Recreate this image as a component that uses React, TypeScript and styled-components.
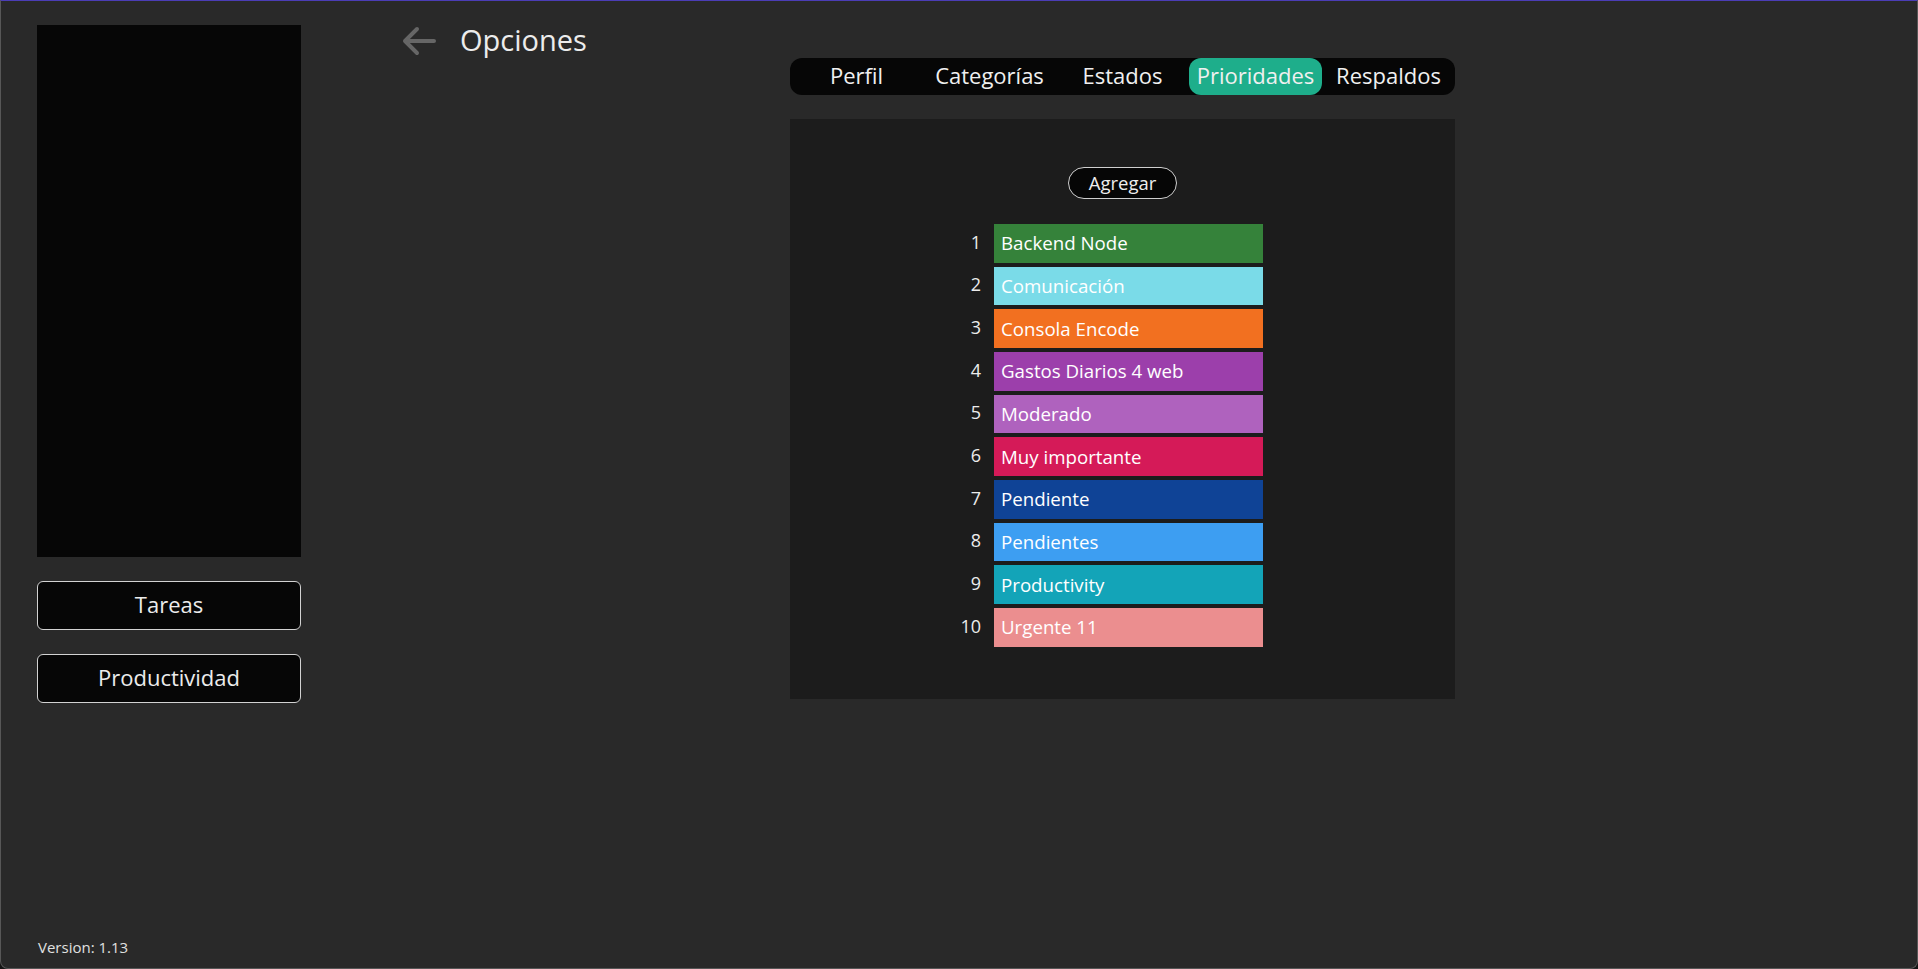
import React from "react";
import styled, { createGlobalStyle } from "styled-components";

const GlobalStyle = createGlobalStyle`
  html, body {
    margin: 0;
    padding: 0;
    background: #141414;
    height: 100%;
  }
  #root {
    height: 100%;
  }
  * {
    box-sizing: border-box;
  }
`;

const Window = styled.div`
  height: 100vh;
  display: flex;
  background: #292929;
  border: 1px solid #575757;
  border-top: 1px solid #4b3db6;
  border-radius: 0 0 8px 8px;
  font-family: "Open Sans", "Noto Sans", sans-serif;
  color: #ececec;
  overflow: hidden;
`;

const Sidebar = styled.aside`
  width: 327px;
  flex-shrink: 0;
  display: flex;
  flex-direction: column;
  padding: 24px 27px 11px 36px;
`;

const Preview = styled.div`
  height: 532px;
  background: #060606;
`;

const NavButton = styled.button`
  margin-top: 24px;
  height: 49px;
  width: 100%;
  padding: 0 0 4px;
  background: #060606;
  border: 1px solid #d2d2d2;
  border-radius: 6px;
  color: #ececec;
  font-family: inherit;
  font-size: 22px;
  cursor: pointer;
`;

const Version = styled.div`
  margin-top: auto;
  padding-left: 1px;
  font-size: 15px;
  line-height: 20px;
  color: #e0e0e0;
`;

const Main = styled.main`
  flex: 1;
  display: flex;
  flex-direction: column;
  padding-top: 23px;
`;

const Header = styled.header`
  height: 34px;
  display: flex;
  align-items: center;
  gap: 24px;
  padding-left: 74px;
`;

const BackButton = styled.button`
  background: none;
  border: none;
  padding: 0;
  display: flex;
  cursor: pointer;
`;

const Title = styled.h1`
  margin: 0 0 3px;
  font-size: 29px;
  font-weight: 400;
  color: #ececec;
`;

const Content = styled.div`
  width: 665px;
  align-self: center;
  display: flex;
  flex-direction: column;
`;

const TabBar = styled.nav`
  height: 37px;
  display: grid;
  grid-template-columns: repeat(5, 1fr);
  background: #060606;
  border-radius: 12px;
`;

const Tab = styled.div<{ $active?: boolean }>`
  display: flex;
  align-items: center;
  justify-content: center;
  padding-bottom: 3px;
  font-size: 22px;
  color: #f0f0f0;
  border-radius: 12px;
  background: ${(p) => (p.$active ? "#1eae8b" : "transparent")};
  cursor: pointer;
`;

const Panel = styled.section`
  margin-top: 24px;
  background: #1c1c1c;
  padding: 48px 0 52px;
  display: flex;
  flex-direction: column;
  align-items: center;
`;

const AddButton = styled.button`
  height: 32px;
  padding: 0 20px 2px;
  background: #060606;
  border: 1px solid #cfcfcf;
  border-radius: 16px;
  color: #eeeeee;
  font-family: inherit;
  font-size: 18.5px;
  cursor: pointer;
`;

const List = styled.ol`
  list-style: none;
  margin: 25px 0 0;
  padding: 0 41px 0 0;
  display: flex;
  flex-direction: column;
  gap: 4px;
`;

const Row = styled.li`
  display: grid;
  grid-template-columns: 40px 269px;
  column-gap: 13px;
  align-items: center;
`;

const Num = styled.span`
  text-align: right;
  font-size: 18px;
  padding-bottom: 3px;
  color: #ececec;
`;

const Bar = styled.div<{ $color: string }>`
  height: 38.67px;
  display: flex;
  align-items: center;
  padding: 0 0 1px 7px;
  background: ${(p) => p.$color};
  color: #ffffff;
  font-size: 18.7px;
  white-space: nowrap;
`;

const priorities = [
  { name: "Backend Node", color: "#35823a" },
  { name: "Comunicación", color: "#7adbe8" },
  { name: "Consola Encode", color: "#f27020" },
  { name: "Gastos Diarios 4 web", color: "#9c3fab" },
  { name: "Moderado", color: "#af62be" },
  { name: "Muy importante", color: "#d51a58" },
  { name: "Pendiente", color: "#0f4396" },
  { name: "Pendientes", color: "#3d9ef2" },
  { name: "Productivity", color: "#13a4b8" },
  { name: "Urgente 11", color: "#eb8e8f" },
];

const tabs = ["Perfil", "Categorías", "Estados", "Prioridades", "Respaldos"];

const BackArrow = () => (
  <svg width="34" height="30" viewBox="0 0 34 30" fill="none">
    <path
      d="M32 15H3M15 3 3 15l12 12"
      stroke="#666666"
      strokeWidth="4"
      strokeLinecap="round"
      strokeLinejoin="round"
    />
  </svg>
);

export default function App() {
  return (
    <>
      <GlobalStyle />
      <Window>
        <Sidebar>
          <Preview />
          <NavButton>Tareas</NavButton>
          <NavButton>Productividad</NavButton>
          <Version>Version: 1.13</Version>
        </Sidebar>
        <Main>
          <Header>
            <BackButton aria-label="Volver">
              <BackArrow />
            </BackButton>
            <Title>Opciones</Title>
          </Header>
          <Content>
            <TabBar>
              {tabs.map((t) => (
                <Tab key={t} $active={t === "Prioridades"}>
                  {t}
                </Tab>
              ))}
            </TabBar>
            <Panel>
              <AddButton>Agregar</AddButton>
              <List>
                {priorities.map((p, i) => (
                  <Row key={p.name}>
                    <Num>{i + 1}</Num>
                    <Bar $color={p.color}>{p.name}</Bar>
                  </Row>
                ))}
              </List>
            </Panel>
          </Content>
        </Main>
      </Window>
    </>
  );
}
